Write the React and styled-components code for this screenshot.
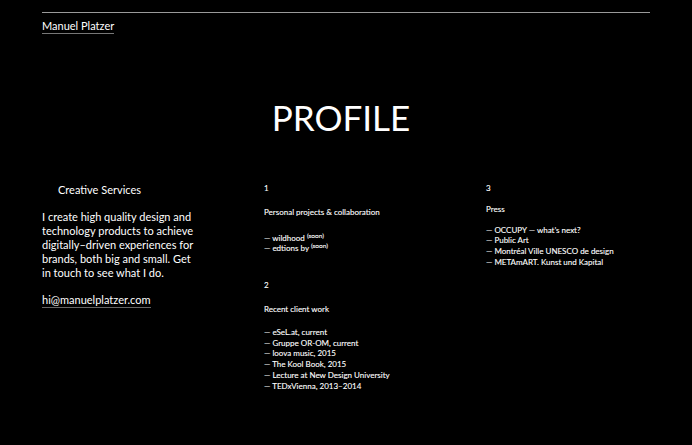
import React from 'react';
import styled, { createGlobalStyle } from 'styled-components';

const GlobalStyle = createGlobalStyle`
  html, body {
    margin: 0;
    padding: 0;
    background: #000;
    color: #fff;
    font-family: Lato, "Noto Sans", sans-serif;
  }
`;

const SPage = styled.div`
  width: 608px;
  margin-left: 42px;
  min-height: 445px;
`;

const SHeader = styled.header`
  border-top: 1px solid #9a9a9a;
  margin-top: 12px;
  padding-top: 1px;
`;

const SNameLink = styled.a`
  display: inline-block;
  color: #fff;
  text-decoration: none;
  font-size: 11px;
  line-height: 12px;
  padding-bottom: 1px;
  border-bottom: 1px solid #777;
`;

const STitle = styled.h1`
  margin: 63px 0 0;
  padding-right: 10px;
  text-align: center;
  font-size: 35px;
  font-weight: 400;
  line-height: 40px;
`;

const SColumns = styled.div`
  display: grid;
  grid-template-columns: 222px 222px 1fr;
  margin-top: 46px;
`;

const SServices = styled.div`
  font-size: 11px;
  line-height: 14px;
`;

const SServiceTitle = styled.div`
  padding-left: 16px;
  margin-bottom: 13px;
`;

const SParagraph = styled.p`
  margin: 0 0 13px;
  width: 152px;
`;

const SMail = styled.a`
  color: #fff;
  text-decoration: none;
  border-bottom: 1px solid #666;
  padding-bottom: 1px;
`;

const SGroup = styled.div`
  font-size: 8px;
  line-height: 10.8px;
  -webkit-text-stroke: 0.1px #fff;
  margin-bottom: ${(props) => props.mb || 0}px;
`;

const SNumber = styled.div`
  margin-bottom: ${(props) => props.gap || 13}px;
`;

const SGroupTitle = styled.div`
  margin-bottom: ${(props) => props.gap || 14}px;
`;

const SList = styled.ul`
  list-style: none;
  margin: 0;
  padding: 0;
`;

const SSup = styled.sup`
  font-size: 6.5px;
  vertical-align: 3px;
  line-height: 0;
`;

const client = [
  'eSeL.at, current',
  'Gruppe OR-OM, current',
  'loova music, 2015',
  'The Kool Book, 2015',
  'Lecture at New Design University',
  'TEDxVienna, 2013–2014',
];

const press = [
  'OCCUPY — what’s next?',
  'Public Art',
  'Montréal Ville UNESCO de design',
  'METAmART. Kunst und Kapital',
];

export default function App() {
  return (
    <>
      <GlobalStyle />
      <SPage>
        <SHeader>
          <SNameLink href="#">Manuel Platzer</SNameLink>
        </SHeader>
        <STitle>PROFILE</STitle>
        <SColumns>
          <SServices>
            <SServiceTitle>Creative Services</SServiceTitle>
            <SParagraph>
              I create high quality design and technology products to achieve
              digitally–driven experiences for brands, both big and small. Get
              in touch to see what I do.
            </SParagraph>
            <SMail href="#">hi@manuelplatzer.com</SMail>
          </SServices>
          <div>
            <SGroup mb={26}>
              <SNumber>1</SNumber>
              <SGroupTitle gap={15}>Personal projects &amp; collaboration</SGroupTitle>
              <SList>
                <li>— wildhood <SSup>(soon)</SSup></li>
                <li>— edtions by <SSup>(soon)</SSup></li>
              </SList>
            </SGroup>
            <SGroup>
              <SNumber>2</SNumber>
              <SGroupTitle gap={12}>Recent client work</SGroupTitle>
              <SList>
                {client.map((c) => (
                  <li key={c}>— {c}</li>
                ))}
              </SList>
            </SGroup>
          </div>
          <div>
            <SGroup>
              <SNumber gap={10}>3</SNumber>
              <SGroupTitle gap={10}>Press</SGroupTitle>
              <SList>
                {press.map((p) => (
                  <li key={p}>— {p}</li>
                ))}
              </SList>
            </SGroup>
          </div>
        </SColumns>
      </SPage>
    </>
  );
}
